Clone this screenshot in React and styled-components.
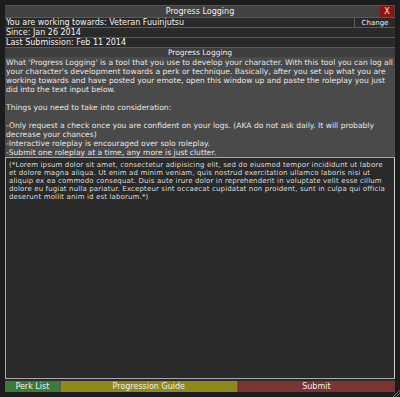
import React from "react";
import styled, { createGlobalStyle } from "styled-components";

const Global = createGlobalStyle`
  html, body {
    margin: 0;
    padding: 0;
    background: #1c1c1c;
  }
  body {
    font-family: "DejaVu Sans", Verdana, sans-serif;
  }
`;

const Page = styled.div`
  width: 400px;
  height: 397px;
  box-sizing: border-box;
  padding: 5px 5px 0 5px;
  background: #1c1c1c;
  position: relative;
`;

const Window = styled.div`
  display: flex;
  flex-direction: column;
  width: 390px;
  background: #2b2b2b;
`;

const TitleBar = styled.div`
  display: flex;
  align-items: center;
  height: 11px;
  background: #424242;
  border-top: 1px solid #555;
  color: #f0f0f0;
  font-size: 8px;
  position: relative;
  justify-content: center;
`;

const Close = styled.div`
  position: absolute;
  right: 1px;
  top: 0;
  width: 14px;
  height: 11px;
  background: #8e1414;
  color: #f4e4e4;
  font-size: 8px;
  display: flex;
  align-items: center;
  justify-content: center;
`;

const InfoRow = styled.div`
  display: flex;
  height: 9px;
  align-items: center;
  background: #2a2a2a;
  border-top: 1px solid #5a5a5a;
  color: #f2f2f2;
  font-size: 8px;
  padding-left: 1px;
`;

const InfoText = styled.span`
  flex: 1;
`;

const SmallButton = styled.div`
  width: 40px;
  height: 9px;
  border-left: 1px solid #5a5a5a;
  display: flex;
  align-items: center;
  justify-content: center;
  font-size: 7px;
  color: #eee;
`;

const Header = styled.div`
  height: 9px;
  display: flex;
  align-items: center;
  justify-content: center;
  background: #3e3e3e;
  border-top: 1px solid #5a5a5a;
  color: #f0f0f0;
  font-size: 7.5px;
`;

const Body = styled.div`
  background: #4a4a4a;
  color: #e6e6e6;
  font-size: 7.6px;
  line-height: 9px;
  padding: 1px 1px 0 1px;
  height: 100px;
  box-sizing: border-box;
  overflow: hidden;
  white-space: pre-wrap;
`;

const Input = styled.div`
  height: 222px;
  box-sizing: border-box;
  background: #2a2a2a;
  border: 1px solid #a8a8a8;
  border-right-color: #d0d0d0;
  padding: 3px 3px;
  color: #dcdcdc;
  font-size: 7px;
  line-height: 8px;
  letter-spacing: 0.14px;
`;

const ButtonBar = styled.div`
  display: flex;
  height: 11px;
  margin-top: 2px;
`;

const BarButton = styled.div`
  width: ${(p) => p.w}px;
  background: ${(p) => p.bg};
  color: #f2ecec;
  font-size: 8px;
  display: flex;
  align-items: center;
  justify-content: center;
  border-right: 1px solid #5a5a5a;
  &:last-child {
    border-right: none;
  }
`;

const Grip = styled.svg`
  position: absolute;
  right: 0;
  bottom: 0;
`;

const bodyText = `What 'Progress Logging' is a tool that you use to develop your character. With this tool you can log all your character's development towards a perk or technique. Basically, after you set up what you are working towards and have posted your emote, open this window up and paste the roleplay you just did into the text input below.

Things you need to take into consideration:

-Only request a check once you are confident on your logs. (AKA do not ask daily. It will probably decrease your chances)
-Interactive roleplay is encouraged over solo roleplay.
-Submit one roleplay at a time, any more is just clutter.`;

export default function App() {
  return (
    <Page>
      <Global />
      <Window>
        <TitleBar>
          Progress Logging
          <Close>X</Close>
        </TitleBar>
        <InfoRow>
          <InfoText>You are working towards: Veteran Fuuinjutsu</InfoText>
          <SmallButton>Change</SmallButton>
        </InfoRow>
        <InfoRow>
          <InfoText>Since: Jan 26 2014</InfoText>
        </InfoRow>
        <InfoRow>
          <InfoText>Last Submission: Feb 11 2014</InfoText>
        </InfoRow>
        <Header>Progress Logging</Header>
        <Body>{bodyText}</Body>
        <Input>
          (*Lorem ipsum dolor sit amet, consectetur adipisicing elit, sed do
          eiusmod tempor incididunt ut labore et dolore magna aliqua. Ut enim ad
          minim veniam, quis nostrud exercitation ullamco laboris nisi ut
          aliquip ex ea commodo consequat. Duis aute irure dolor in
          reprehenderit in voluptate velit esse cillum dolore eu fugiat nulla
          pariatur. Excepteur sint occaecat cupidatat non proident, sunt in
          culpa qui officia deserunt mollit anim id est laborum.*)
        </Input>
        <ButtonBar>
          <BarButton w={55} bg="#3b7a3b">Perk List</BarButton>
          <BarButton w={177} bg="#8c8a1e">Progression Guide</BarButton>
          <BarButton w={158} bg="#7a3434">Submit</BarButton>
        </ButtonBar>
      </Window>
      <Grip width="8" height="8" viewBox="0 0 8 8">
        <path d="M8 1 L1 8 M8 4 L4 8" stroke="#777" strokeWidth="1" />
      </Grip>
    </Page>
  );
}
